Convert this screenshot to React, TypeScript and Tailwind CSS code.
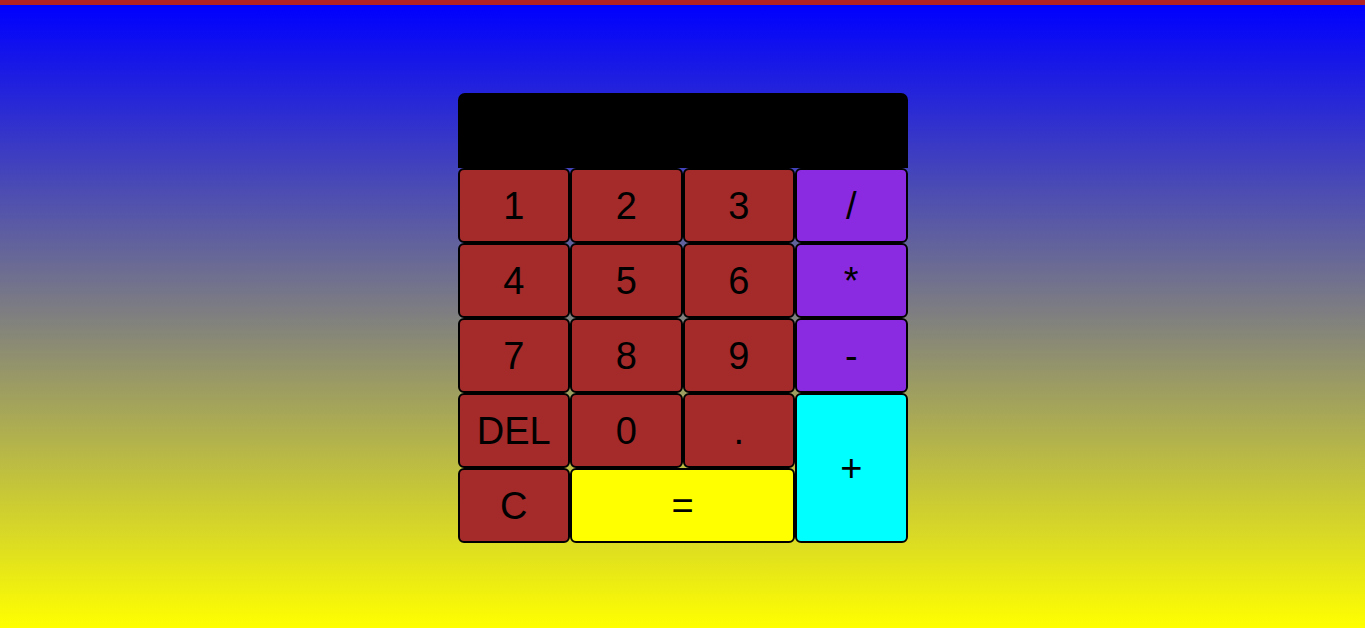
import React, { useState } from 'react';

type Key = { label: string; cls: string };

const brown = 'bg-[#a52a2a]';
const purple = 'bg-[#8a2be2]';

const App: React.FC = () => {
  const [display, setDisplay] = useState('');

  const press = (label: string) => {
    if (label === 'C') return setDisplay('');
    if (label === 'DEL') return setDisplay(display.slice(0, -1));
    if (label === '=') {
      try {
        // eslint-disable-next-line no-new-func
        setDisplay(String(Function(`return (${display || 0})`)()));
      } catch {
        setDisplay('Error');
      }
      return;
    }
    setDisplay(display + label);
  };

  const keys: Key[] = [
    { label: '1', cls: brown },
    { label: '2', cls: brown },
    { label: '3', cls: brown },
    { label: '/', cls: purple },
    { label: '4', cls: brown },
    { label: '5', cls: brown },
    { label: '6', cls: brown },
    { label: '*', cls: purple },
    { label: '7', cls: brown },
    { label: '8', cls: brown },
    { label: '9', cls: brown },
    { label: '-', cls: purple },
    { label: 'DEL', cls: brown },
    { label: '0', cls: brown },
    { label: '.', cls: brown },
    { label: '+', cls: 'bg-[#00ffff] row-span-2' },
    { label: 'C', cls: brown },
    { label: '=', cls: 'bg-[#ffff00] col-span-2' },
  ];

  return (
    <div className="min-h-screen border-t-[5px] border-[#b22222] bg-[linear-gradient(to_bottom,#0000ff,#ffff00)] pt-[88px] font-['Liberation_Sans',Arial,sans-serif]">
      <div className="mx-auto w-[450px]">
        {/* Display */}
        <div className="h-[75px] rounded-t-[7px] bg-black px-4 flex items-center justify-end text-white text-[38px] overflow-hidden">
          {display}
        </div>
        {/* Keys */}
        <div className="grid grid-cols-4 auto-rows-[75px]">
          {keys.map((k) => (
            <button
              key={k.label}
              onClick={() => press(k.label)}
              className={`${k.cls} border-2 border-black rounded-[6px] text-[38px] text-black leading-none flex items-center justify-center cursor-pointer`}
            >
              {k.label}
            </button>
          ))}
        </div>
      </div>
    </div>
  );
};

export default App;
